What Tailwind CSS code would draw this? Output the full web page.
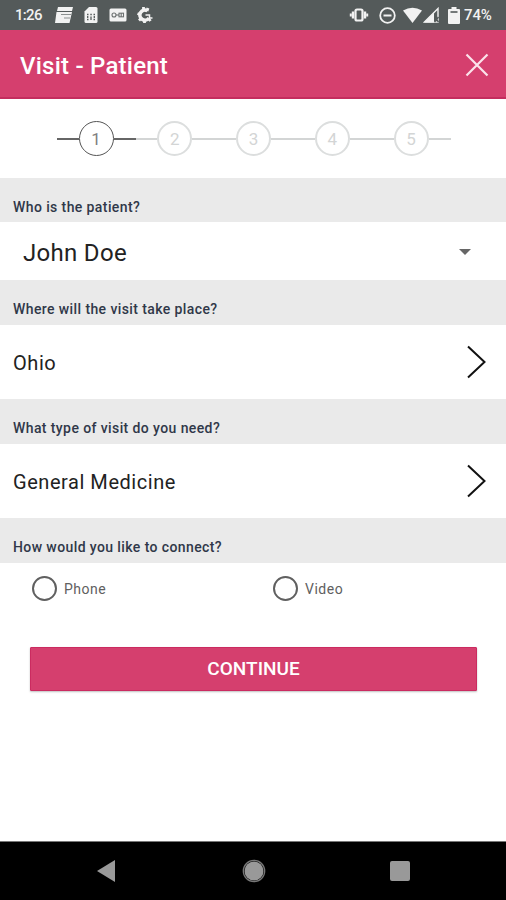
<!DOCTYPE html>
<html lang="en">
<head>
<meta charset="utf-8">
<title>Visit - Patient</title>
<script src="https://cdn.jsdelivr.net/npm/@tailwindcss/browser@4"></script>
</head>
<body class="bg-white">
<div class="flex h-[900px] w-[506px] flex-col overflow-hidden bg-white font-[Roboto,sans-serif] text-[#222]">
  <div class="flex h-[30px] shrink-0 items-center bg-[#545a5a] pr-[13px] pl-[15px] text-[#f2f2f2]">
    <span class="w-[40px] text-[15px] font-medium tracking-[-0.7px]">1:26</span>
    <svg class="mr-[11px] h-[18px] w-[18px]" viewBox="0 0 18 18" fill="currentColor"><path d="M3 1h15l-1 4H2zM1.500 6h15.500l-2.500 11H0z"/><path d="M6 8.500h10M9 12h6" stroke="#8b9090" stroke-width="1"/><path d="M2 5.500h15" stroke="#545a5a" stroke-width="1"/></svg>
    <svg class="mr-[11px] h-[16px] w-[14px]" viewBox="0 0 14 16"><path d="M5 0h7q1.500 0 1.500 1.500v13q0 1.500-1.500 1.500H2q-1.500 0-1.500-1.500V4.500z" fill="currentColor"/><path d="M3 7.500h1.500M6.300 7.500h1.500M9.500 7.500H11M3 12.500h1.500M9.500 12.500H11M3.700 9v2M7 9.500v3.500M10.300 9v2" stroke="#545a5a" stroke-width="1.300"/></svg>
    <svg class="mr-[10px] h-[14px] w-[18px]" viewBox="0 0 18 14"><rect x=".5" y=".5" width="17" height="13" rx="1.500" fill="currentColor"/><g fill="none" stroke="#6c7171" stroke-width="1.100"><circle cx="5" cy="7" r="2"/><path d="M7 7h3"/><rect x="10" y="5.200" width="4.500" height="3.600"/><path d="M12.200 5v4"/></g></svg>
    <svg class="h-[16px] w-[16px]" viewBox="0 0 16 16" fill="none" stroke="currentColor"><path d="M10.500 3.800A5 5 0 1 0 12 11" stroke-width="3.600"/><path d="M6.500 0v3M11 1l-1 3M.5 6.500 3 7.500M2 13.500l2-2M7.500 13v3M13.500 14 11.500 11.500" stroke-width="2.800"/><path d="M8.500 8h4v3h3" stroke-width="1.500"/></svg>
    <div class="ml-auto flex items-center">
      <svg class="mr-[10px] h-[16px] w-[20px]" viewBox="0 0 20 16" fill="none" stroke="currentColor"><rect x="6.500" y="2.500" width="7" height="11" rx="1.500" stroke-width="2.200"/><path d="M4 4.500v7M16 4.500v7" stroke-width="2.400"/><path d="M1.800 6.500v3M18.200 6.500v3" stroke-width="2"/></svg>
      <svg class="mr-[7px] h-[17px] w-[17px]" viewBox="0 0 17 17" fill="none" stroke="currentColor" stroke-width="1.800"><circle cx="8.500" cy="8.500" r="7.300"/><path d="M4.500 8.500h8" stroke-width="2"/></svg>
      <svg class="mr-[1px] h-[16px] w-[19px]" viewBox="0 0 19 16" fill="currentColor"><path d="M0 3.500Q9.500-2 19 3.500L9.500 16z"/></svg>
      <svg class="mr-[8px] h-[16px] w-[17px]" viewBox="0 0 17 16"><path d="M1.500 15 15 1.500V15z" fill="none" stroke="currentColor" stroke-width="1.400"/><path d="M1 15.500 11 5.500V15.500z" fill="currentColor"/><path d="m11.500 10 4 5m0-5-4 5" stroke="#545a5a" stroke-width="1.500"/></svg>
      <svg class="mr-[4px] h-[17px] w-[12px]" viewBox="0 0 12 17"><path d="M3.500 0h5v2H11q1 0 1 1v13q0 1-1 1H1q-1 0-1-1V3q0-1 1-1h2.500z" fill="currentColor"/><path d="M2.500 5h7" stroke="#545a5a" stroke-width="1.600"/></svg>
      <span class="w-[29px] text-[15px] font-medium tracking-[-0.1px]">74%</span>
    </div>
  </div>
  <header class="flex h-[69px] shrink-0 items-center justify-between border-b-2 border-[#c42d5e] bg-[#d53f6e] pt-[3px] pr-[17px] pl-[20px] text-white">
    <h1 class="pt-[1px] text-[24px] font-medium tracking-[0.23px]">Visit - Patient</h1>
    <svg class="h-[24px] w-[24px]" viewBox="0 0 24 24" fill="none" stroke="#fbe3eb" stroke-width="2.200"><path d="m1.500 1.500 21 21m0-21-21 21"/></svg>
  </header>
  <div class="flex h-[79px] shrink-0 items-center pl-[56.500px] text-[17px] leading-none text-[#d3d5d5]">
    <i class="h-[2px] w-[22px] bg-[#666]"></i>
    <span class="flex h-[35px] w-[35px] items-center justify-center rounded-full border-[1.500px] border-[#555] pt-[1px] text-[#808080]">1</span>
    <i class="h-[2px] w-[22px] bg-[#666]"></i><i class="h-[2px] w-[21.700px] bg-[#d3d5d5]"></i>
    <span class="flex h-[35px] w-[35px] items-center justify-center rounded-full border-2 border-[#dcdede] pt-[1px]">2</span>
    <i class="h-[2px] w-[43.800px] bg-[#d3d5d5]"></i>
    <span class="flex h-[35px] w-[35px] items-center justify-center rounded-full border-2 border-[#dcdede] pt-[1px]">3</span>
    <i class="h-[2px] w-[43.800px] bg-[#d3d5d5]"></i>
    <span class="flex h-[35px] w-[35px] items-center justify-center rounded-full border-2 border-[#dcdede] pt-[1px]">4</span>
    <i class="h-[2px] w-[43.800px] bg-[#d3d5d5]"></i>
    <span class="flex h-[35px] w-[35px] items-center justify-center rounded-full border-2 border-[#dcdede] pt-[1px]">5</span>
    <i class="h-[2px] w-[22px] bg-[#d3d5d5]"></i>
  </div>
  <h2 class="h-[44px] shrink-0 bg-[#eaeaea] pt-[19px] pl-[13px] text-[14px] leading-[20px] font-medium tracking-[0.4px] text-[#303849]">Who is the patient?</h2>
  <div class="flex h-[58px] shrink-0 items-center justify-between pt-[2px] pr-[35px] pl-[23px] text-[24px]">
    <span class="pt-[1px] tracking-[0.3px]">John Doe</span>
    <svg class="h-[6px] w-[12px]" viewBox="0 0 12 6" fill="#666"><path d="M0 0h12L6 6z"/></svg>
  </div>
  <h2 class="h-[45px] shrink-0 bg-[#eaeaea] pt-[19px] pl-[13px] text-[14px] leading-[20px] font-medium tracking-[0.4px] text-[#303849]">Where will the visit take place?</h2>
  <div class="flex h-[74px] shrink-0 items-center justify-between pr-[20px] pl-[13px] text-[20px]">
    <span class="pt-[2px] tracking-[0.55px]">Ohio</span>
    <svg class="h-[34px] w-[19px]" viewBox="0 0 19 34" fill="none" stroke="#111" stroke-width="2"><path d="m1 1.500 16.500 15.500L1 32.500"/></svg>
  </div>
  <h2 class="h-[45px] shrink-0 bg-[#eaeaea] pt-[19px] pl-[13px] text-[14px] leading-[20px] font-medium tracking-[0.4px] text-[#303849]">What type of visit do you need?</h2>
  <div class="flex h-[74px] shrink-0 items-center justify-between pr-[20px] pl-[13px] text-[20px]">
    <span class="pt-[2px] tracking-[0.55px]">General Medicine</span>
    <svg class="h-[34px] w-[19px]" viewBox="0 0 19 34" fill="none" stroke="#111" stroke-width="2"><path d="m1 1.500 16.500 15.500L1 32.500"/></svg>
  </div>
  <h2 class="h-[45px] shrink-0 bg-[#eaeaea] pt-[19px] pl-[13px] text-[14px] leading-[20px] font-medium tracking-[0.4px] text-[#303849]">How would you like to connect?</h2>
  <div class="flex h-[84px] shrink-0 items-start pt-[13px] pl-[32px] text-[14px] text-[#606060]">
    <label class="flex w-[241px] items-center gap-[7px]"><span class="h-[25px] w-[25px] rounded-full border-2 border-[#606060]"></span><span class="pt-[2px] tracking-[0.5px]">Phone</span></label>
    <label class="flex items-center gap-[7px]"><span class="h-[25px] w-[25px] rounded-full border-2 border-[#606060]"></span><span class="pt-[2px] tracking-[0.5px]">Video</span></label>
  </div>
  <button class="mr-[29px] ml-[30px] h-[44px] shrink-0 rounded-[1px] border border-[#cb2b60] bg-[#d53f6e] pt-0 text-[19px] font-medium text-white shadow-[0_1px_2px_rgba(0,0,0,0.25)]">CONTINUE</button>
  <nav class="mt-auto flex h-[59px] shrink-0 items-center border-t border-[#777] bg-black pl-[97px]">
    <svg class="mr-[127px] h-[22px] w-[18px]" viewBox="0 0 18 22" fill="#999"><path d="M0 11 18 0v22z"/></svg>
    <svg class="mr-[124px] h-[24px] w-[24px]" viewBox="0 0 24 24"><circle cx="12" cy="12" r="9.500" fill="#999"/><circle cx="12" cy="12" r="10.700" fill="none" stroke="#777" stroke-width="1.300"/></svg>
    <i class="h-[20px] w-[20px] rounded-[2px] bg-[#999]"></i>
  </nav>
</div>
</body>
</html>
